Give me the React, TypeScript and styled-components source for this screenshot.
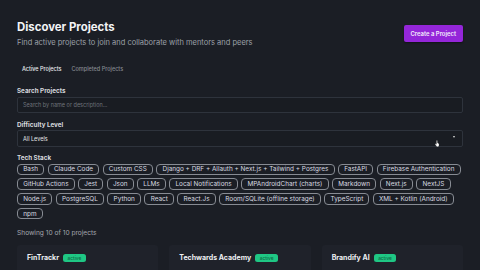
import React from "react";
import styled, { createGlobalStyle } from "styled-components";

const GlobalStyle = createGlobalStyle`
  html, body {
    margin: 0;
    padding: 0;
    background: #1b1e25;
    font-family: Inter, "Noto Sans", sans-serif;
    color: #e8e9ec;
    overflow: hidden;
  }
  * { box-sizing: border-box; }
`;

const Page = styled.div`
  width: 480px;
  height: 270px;
  overflow: hidden;
  padding: 17px 17px 0;
  display: flex;
  flex-direction: column;
  & > * { flex-shrink: 0; }
`;

const Header = styled.div`
  display: flex;
  justify-content: space-between;
  align-items: flex-start;
`;

const TitleBlock = styled.div`
  display: flex;
  flex-direction: column;
`;

const Title = styled.h1`
  margin: 0;
  margin-top: 1px;
  font-size: 11.4px;
  font-weight: 700;
  line-height: 18px;
  color: #f3f4f6;
`;

const Subtitle = styled.p`
  margin: 2px 0 0;
  font-size: 7.5px;
  line-height: 9px;
  color: #9ca0a8;
`;

const CreateButton = styled.button`
  margin-top: 8px;
  height: 17px;
  padding: 0 7px;
  border: none;
  border-radius: 2px;
  background: #9426d9;
  color: #f5eefc;
  font-family: inherit;
  font-size: 5.9px;
  font-weight: 600;
  box-shadow: 0 1px 2px rgba(0, 0, 0, 0.4);
`;

const Tabs = styled.div`
  display: flex;
  gap: 10px;
  margin-top: 13px;
  padding-left: 5px;
  height: 18px;
  align-items: center;
`;

const Tab = styled.span<{ $active?: boolean }>`
  font-size: 5.5px;
  font-weight: 500;
  color: ${(p) => (p.$active ? "#eceef1" : "#868a92")};
`;

const Field = styled.div<{ $gap: number }>`
  display: flex;
  flex-direction: column;
  margin-top: ${(p) => p.$gap}px;
`;

const Label = styled.label`
  font-size: 6.3px;
  font-weight: 700;
  color: #d6d8dc;
  line-height: 7px;
  margin-bottom: 1.5px;
`;

const Input = styled.div`
  height: 16px;
  border: 1px solid #2e333c;
  border-radius: 2px;
  background: #191c22;
  display: flex;
  align-items: center;
  padding: 0 5px;
  font-size: 5.5px;
  color: #6f737b;
`;

const Select = styled(Input)`
  height: 17px;
  justify-content: space-between;
  color: #e6e7ea;
  position: relative;
`;

const Caret = styled.span`
  width: 0;
  height: 0;
  border-left: 1.5px solid transparent;
  border-right: 1.5px solid transparent;
  border-top: 2px solid #e0e0e0;
  margin-right: 2px;
  margin-top: -4px;
`;

const Cursor = styled.svg`
  position: absolute;
  right: 22px;
  top: 9px;
  width: 5px;
  height: 7px;
`;

const Tags = styled.div`
  display: flex;
  flex-wrap: wrap;
  gap: 3.3px 3.4px;
`;

const Tag = styled.span`
  height: 11.5px;
  padding: 0 5.2px;
  border: 1px solid #878b93;
  border-radius: 4px;
  display: flex;
  align-items: center;
  font-size: 6.4px;
  color: #d9dbe0;
  white-space: nowrap;
`;

const Count = styled.div`
  margin-top: 10px;
  font-size: 6.6px;
  line-height: 8px;
  color: #a3a6ad;
`;

const Cards = styled.div`
  margin-top: 8px;
  display: grid;
  grid-template-columns: repeat(3, 1fr);
  gap: 11px;
  flex: 1 1 auto;
  flex-shrink: 1;
  min-height: 0;
`;

const Card = styled.div`
  background: #1f222a;
  border-radius: 3px 3px 0 0;
  padding: 8px 10px;
`;

const CardHead = styled.div`
  display: flex;
  align-items: center;
  gap: 4px;
`;

const CardTitle = styled.span`
  font-size: 7px;
  font-weight: 700;
  color: #eef0f3;
`;

const Badge = styled.span`
  background: #1fc784;
  color: #0f6b45;
  font-size: 4.8px;
  font-weight: 500;
  height: 8px;
  padding: 0 4.5px;
  border-radius: 2.5px;
  display: flex;
  align-items: center;
`;

const stack = [
  "Bash",
  "Claude Code",
  "Custom CSS",
  "Django + DRF + Allauth + Next.js + Tailwind + Postgres",
  "FastAPI",
  "Firebase Authentication",
  "GitHub Actions",
  "Jest",
  "Json",
  "LLMs",
  "Local Notifications",
  "MPAndroidChart (charts)",
  "Markdown",
  "Next.js",
  "NextJS",
  "Node.js",
  "PostgreSQL",
  "Python",
  "React",
  "React.Js",
  "Room/SQLite (offline storage)",
  "TypeScript",
  "XML + Kotlin (Android)",
  "npm",
];

const projects = ["FinTrackr", "Techwards Academy", "Brandify AI"];

export default function App() {
  return (
    <>
      <GlobalStyle />
      <Page>
        <Header>
          <TitleBlock>
            <Title>Discover Projects</Title>
            <Subtitle>Find active projects to join and collaborate with mentors and peers</Subtitle>
          </TitleBlock>
          <CreateButton>Create a Project</CreateButton>
        </Header>
        <Tabs>
          <Tab $active>Active Projects</Tab>
          <Tab>Completed Projects</Tab>
        </Tabs>
        <Field $gap={10}>
          <Label>Search Projects</Label>
          <Input>Search by name or description...</Input>
        </Field>
        <Field $gap={9}>
          <Label>Difficulty Level</Label>
          <Select>
            All Levels
            <Caret />
            <Cursor viewBox="0 0 14 18">
              <path
                d="M4 1.5c0-.8.6-1.5 1.4-1.5s1.4.7 1.4 1.5V7l.2-.1c.8 0 1.4.5 1.4 1.2l.1-.1c.8 0 1.4.5 1.4 1.2.8 0 1.4.6 1.4 1.3v3.2c0 2.3-1.8 4.3-4.2 4.3H6.6c-1.3 0-2.4-.7-3.1-1.7L.6 11.5c-.5-.7-.3-1.5.3-1.9.6-.4 1.4-.3 1.9.3L4 11.3V1.5z"
                fill="#fff"
                stroke="#222"
                strokeWidth="0.8"
              />
            </Cursor>
          </Select>
        </Field>
        <Field $gap={8}>
          <Label>Tech Stack</Label>
          <Tags>
            {stack.map((s) => (
              <Tag key={s}>{s}</Tag>
            ))}
          </Tags>
        </Field>
        <Count>Showing 10 of 10 projects</Count>
        <Cards>
          {projects.map((p) => (
            <Card key={p}>
              <CardHead>
                <CardTitle>{p}</CardTitle>
                <Badge>active</Badge>
              </CardHead>
            </Card>
          ))}
        </Cards>
      </Page>
    </>
  );
}
